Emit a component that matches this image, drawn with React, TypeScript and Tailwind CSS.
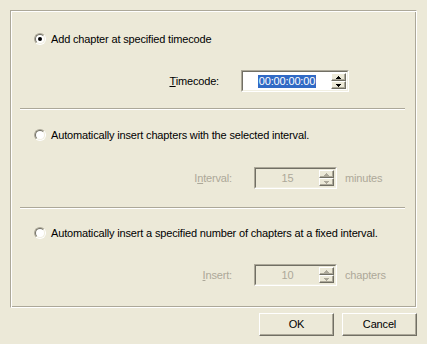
import React from "react"

const FONT = "font-['Tahoma','Liberation_Sans',Arial,sans-serif]"

function Radio({ checked }: { checked?: boolean }) {
    return (
        <span className="flex w-[12px] h-[12px] shrink-0 rounded-full border border-t-[#ACA899] border-l-[#ACA899] border-r-white border-b-white">
            <span className="flex flex-1 items-center justify-center rounded-full border border-t-[#716F64] border-l-[#716F64] border-r-[#F1EFE2] border-b-[#F1EFE2] bg-white">
                {checked && <span className="w-[4px] h-[4px] rounded-full bg-black" />}
            </span>
        </span>
    )
}

function Arrow({ up, disabled }: { up?: boolean; disabled?: boolean }) {
    const fill = disabled ? "#ACA899" : "#000"
    return (
        <svg width="5" height="3" viewBox="0 0 5 3">
            {up ? (
                <path d="M2 0h1v1h1v1h1v1H0V2h1V1h1z" fill={fill} />
            ) : (
                <path d="M0 0h5v1H4v1H3v1H2V2H1V1H0z" fill={fill} />
            )}
        </svg>
    )
}

function SpinBtn({ up, disabled }: { up?: boolean; disabled?: boolean }) {
    return (
        <div className="flex flex-1 items-center justify-center bg-[#ECE9D8] border border-t-white border-l-white border-r-[#716F64] border-b-[#716F64] shadow-[inset_-1px_-1px_0_#ACA899]">
            <Arrow up={up} disabled={disabled} />
        </div>
    )
}

function Spinner({
    value,
    disabled,
    width,
}: {
    value: string
    disabled?: boolean
    width: string
}) {
    return (
        <div
            className={`flex h-[22px] ${width} border border-t-[#ACA899] border-l-[#ACA899] border-r-white border-b-white`}
        >
            <div
                className={`flex flex-1 border border-t-[#716F64] border-l-[#716F64] border-r-[#F1EFE2] border-b-[#F1EFE2] ${
                    disabled ? "bg-[#ECE9D8]" : "bg-white"
                }`}
            >
                <div className="flex flex-1 items-center justify-center">
                    {disabled ? (
                        <span className="text-[#ACA899]">{value}</span>
                    ) : (
                        <span className="bg-[#316AC5] text-white leading-[13px] px-px">{value}</span>
                    )}
                </div>
                <div className="flex flex-col w-[16px] py-px pr-px">
                    <SpinBtn up disabled={disabled} />
                    <SpinBtn disabled={disabled} />
                </div>
            </div>
        </div>
    )
}

function Separator() {
    return (
        <div className="ml-[9px] w-[385px]">
            <div className="h-px bg-[#ACA899]" />
            <div className="h-px bg-white" />
        </div>
    )
}

function Button({ label }: { label: string }) {
    return (
        <div className="flex items-center justify-center w-[75px] h-[23px] bg-[#ECE9D8] border border-t-white border-l-white border-r-[#716F64] border-b-[#716F64] shadow-[inset_-1px_-1px_0_#ACA899]">
            {label}
        </div>
    )
}

export default function App() {
    return (
        <div className={`w-[427px] h-[344px] bg-[#ECE9D8] text-[11px] tracking-[-0.16px] text-black overflow-hidden ${FONT}`}>
            <div className="pt-[10px] pl-[10px]">
                <div className="w-[407px] h-[298px] border border-t-[#ACA899] border-l-[#ACA899] border-r-white border-b-white shadow-[inset_1px_1px_0_#fff,inset_-1px_-1px_0_#ACA899]">
                    {/* section 1 */}
                    <div className="mt-[21px] h-[14px] pl-[23px] flex items-center gap-[5px]">
                        <Radio checked />
                        <span>Add chapter at specified timecode</span>
                    </div>
                    <div className="mt-[24px] flex items-center">
                        <span className="w-[208px] text-right">
                            <span className="underline">T</span>imecode:
                        </span>
                        <div className="ml-[22px]">
                            <Spinner value="00:00:00:00" width="w-[108px]" />
                        </div>
                    </div>
                    <div className="mt-[16px]">
                        <Separator />
                    </div>

                    {/* section 2 */}
                    <div className="mt-[18px] h-[14px] pl-[23px] flex items-center gap-[5px]">
                        <Radio />
                        <span>Automatically insert chapters with the selected interval.</span>
                    </div>
                    <div className="mt-[25px] flex items-center text-[#ACA899]">
                        <span className="w-[221px] text-right">
                            I<span className="underline">n</span>terval:
                        </span>
                        <div className="ml-[22px]">
                            <Spinner value="15" disabled width="w-[83px]" />
                        </div>
                        <span className="ml-[8px]">minutes</span>
                    </div>
                    <div className="mt-[18px]">
                        <Separator />
                    </div>

                    {/* section 3 */}
                    <div className="mt-[17px] h-[14px] pl-[23px] flex items-center gap-[5px]">
                        <Radio />
                        <span>Automatically insert a specified number of chapters at a fixed interval.</span>
                    </div>
                    <div className="mt-[24px] flex items-center text-[#ACA899]">
                        <span className="w-[221px] text-right">
                            <span className="underline">I</span>nsert:
                        </span>
                        <div className="ml-[22px]">
                            <Spinner value="10" disabled width="w-[83px]" />
                        </div>
                        <span className="ml-[8px]">chapters</span>
                    </div>
                </div>
            </div>
            <div className="mt-[5px] pr-[10px] flex justify-end gap-[8px]">
                <Button label="OK" />
                <Button label="Cancel" />
            </div>
        </div>
    )
}
